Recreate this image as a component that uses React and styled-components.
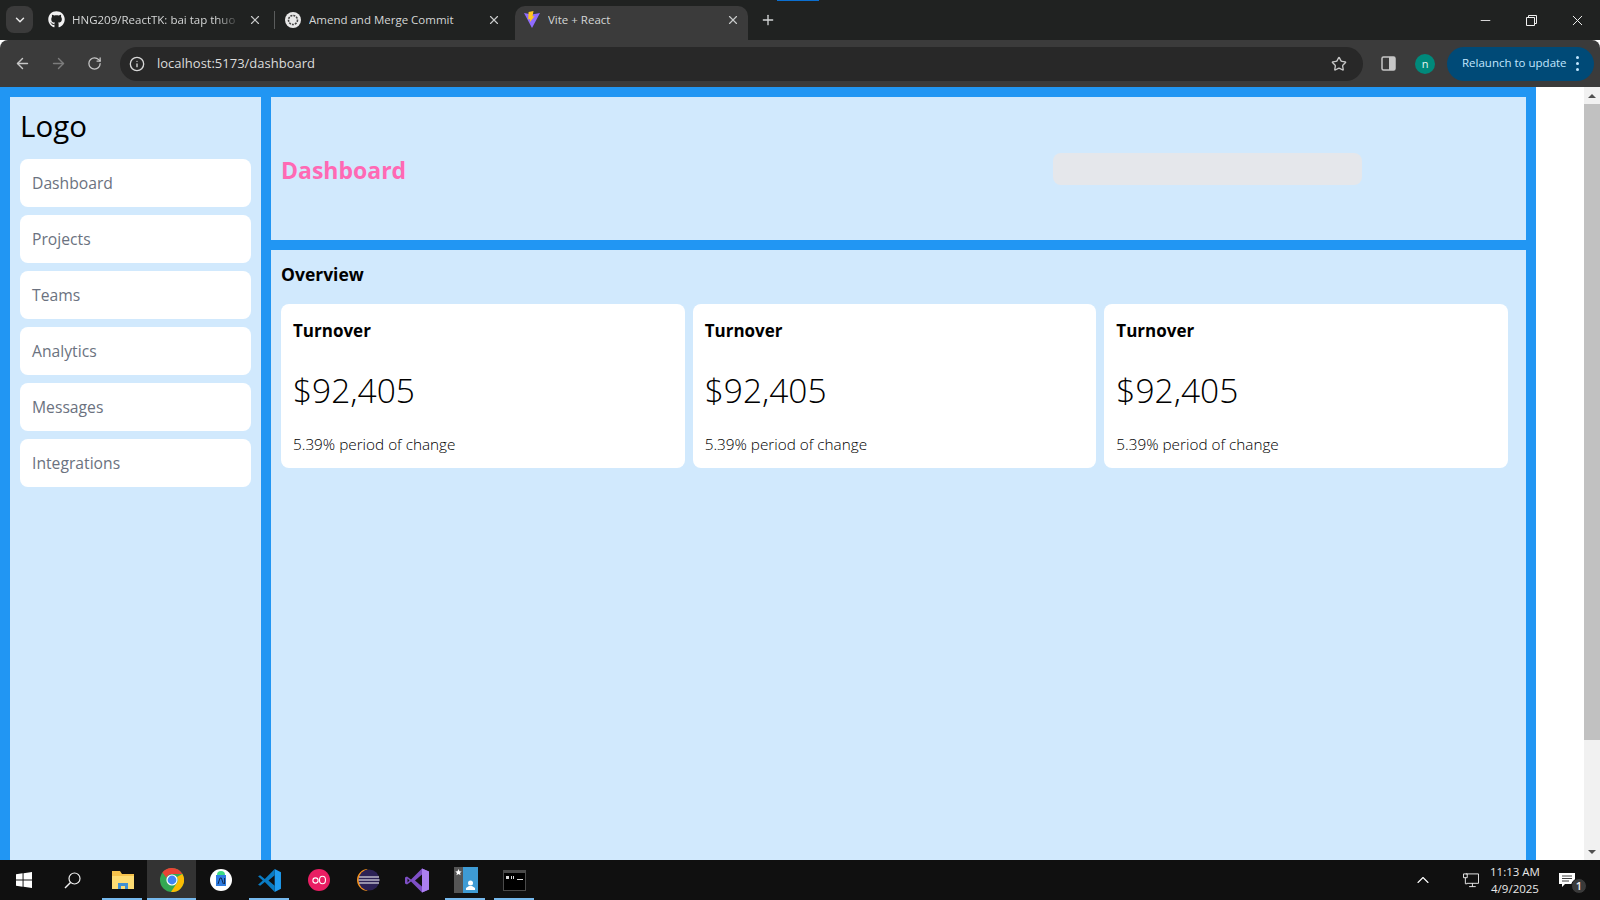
import React from "react";
import styled, { createGlobalStyle } from "styled-components";
import { ArrowLeft, ArrowRight, RotateCw, Info, Star, Plus, X, ChevronDown, ChevronUp, Minus } from "lucide-react";
import { FaGithub } from "react-icons/fa";

const Global = createGlobalStyle`
  html, body { margin: 0; padding: 0; height: 100%; overflow: hidden; }
  body { font-family: "Open Sans", "Liberation Sans", sans-serif; }
  * { box-sizing: border-box; }
`;

const Screen = styled.div`
  width: 1600px;
  height: 900px;
  display: flex;
  flex-direction: column;
  overflow: hidden;
`;

const TabStrip = styled.div`
  height: 40px;
  background: #202221;
  display: flex;
  align-items: flex-end;
  position: relative;
  flex: none;
`;

const TabMenu = styled.div`
  width: 27px;
  height: 27px;
  margin: 0 0 7px 6px;
  border-radius: 8px;
  background: #3b3b3b;
  color: #e8e8e8;
  display: flex;
  align-items: center;
  justify-content: center;
`;

const Tab = styled.div`
  width: ${(p) => p.$width}px;
  height: 34px;
  margin-left: ${(p) => p.$left}px;
  padding: 0 8px 7px 9px;
  display: flex;
  align-items: center;
  gap: ${(p) => p.$gap || 8}px;
  border-radius: 10px 10px 0 0;
  background: ${(p) => (p.$active ? "#3b3b3b" : "transparent")};
  color: #d4d6d6;
  font-size: 11.5px;
`;

const TabTitle = styled.span`
  flex: 1;
  white-space: nowrap;
  overflow: hidden;
  mask-image: ${(p) => (p.$fade ? "linear-gradient(to right, #000 85%, transparent)" : "none")};
`;

const TabDivider = styled.div`
  width: 1px;
  height: 18px;
  margin: 0 0 11px 4px;
  background: #5a5c5c;
`;

const TabClose = styled(X)`
  flex: none;
  color: #c8caca;
`;

const NewTab = styled(Plus)`
  margin: 0 0 12px 12px;
  color: #d4d6d6;
`;

const LoadingMark = styled.div`
  position: absolute;
  top: 0;
  left: 777px;
  width: 42px;
  height: 1px;
  background: #0b6fd0;
`;

const WindowButtons = styled.div`
  margin-left: auto;
  height: 40px;
  display: flex;
  align-items: center;
  color: #f0f0f0;
`;

const WindowButton = styled.div`
  width: 46px;
  display: flex;
  justify-content: center;
`;

const Toolbar = styled.div`
  height: 47px;
  flex: none;
  background: #3b3b3b;
  border-radius: 8px 8px 0 0;
  padding-left: 4px;
  display: flex;
  align-items: center;
  color: #c7c7c7;
`;

const NavButton = styled.div`
  width: 36px;
  display: flex;
  justify-content: center;
  color: ${(p) => (p.$dim ? "#7c7c7c" : "#c7c7c7")};
`;

const Omnibox = styled.div`
  width: 1243px;
  height: 34px;
  margin-left: 8px;
  border-radius: 17px;
  background: #282828;
  display: flex;
  align-items: center;
  padding: 0 16px 0 7px;
`;

const UrlInfo = styled.div`
  width: 20px;
  display: flex;
  justify-content: center;
  color: #d8d8d8;
`;

const Url = styled.span`
  margin: 0 0 2px 10px;
  flex: 1;
  font-size: 13px;
  color: #dcdcdc;
`;

const PanelIcon = styled.svg`
  margin-left: 18px;
  flex: none;
`;

const Avatar = styled.div`
  width: 20px;
  height: 20px;
  margin-left: 19px;
  border-radius: 50%;
  background: #00897b;
  color: #e6f5f3;
  font-size: 11px;
  display: flex;
  align-items: center;
  justify-content: center;
`;

const Relaunch = styled.div`
  width: 147px;
  height: 34px;
  margin-left: 12px;
  border-radius: 17px;
  background: #004a77;
  color: #c2e7ff;
  font-size: 11.5px;
  display: flex;
  align-items: center;
  padding: 0 0 2px 15px;
  gap: 9px;
  white-space: nowrap;
`;

const Dots = styled.div`
  display: flex;
  flex-direction: column;
  gap: 3px;
  margin-top: 2px;
  i {
    width: 3px;
    height: 3px;
    border-radius: 50%;
    background: #c2e7ff;
  }
`;

const Viewport = styled.div`
  flex: 1;
  min-height: 0;
  display: flex;
  background: #fff;
`;

const Page = styled.div`
  width: 1536px;
  height: 100%;
  padding: 10px 10px 0;
  background: #2196f3;
  display: grid;
  grid-template-columns: 251px 1fr;
  gap: 10px;
`;

const Sidebar = styled.aside`
  background: #d1e9fd;
  padding: 8px 10px 10px;
  display: flex;
  flex-direction: column;
  gap: 8px;
`;

const Logo = styled.h1`
  margin: 0 0 4px;
  height: 42px;
  font-size: 29.5px;
  line-height: 42px;
  font-weight: 400;
  color: #000;
`;

const NavItem = styled.div`
  height: 48px;
  padding: 0 12px;
  display: flex;
  align-items: center;
  border-radius: 8px;
  background: #fff;
  color: #6b7280;
  font-size: 15.7px;
  font-weight: 500;
`;

const Main = styled.main`
  display: flex;
  flex-direction: column;
  gap: 10px;
  min-height: 0;
`;

const Header = styled.header`
  height: 143px;
  flex: none;
  background: #d1e9fd;
  padding: 0 164px 0 10px;
  display: flex;
  align-items: center;
  justify-content: space-between;
`;

const PageTitle = styled.h2`
  margin: 2px 0 0;
  font-size: 23px;
  font-weight: 700;
  color: #ff69b4;
`;

const SearchBox = styled.div`
  width: 309px;
  height: 32px;
  border-radius: 8px;
  background: #e5e7eb;
`;

const Overview = styled.section`
  flex: 1;
  background: #d1e9fd;
  padding: 11px 18px 0 10px;
`;

const SectionTitle = styled.h3`
  margin: 0 0 17px;
  height: 26px;
  font-size: 17.5px;
  line-height: 26px;
  font-weight: 700;
  color: #000;
`;

const Cards = styled.div`
  display: grid;
  grid-template-columns: repeat(3, 1fr);
  gap: 8px;
`;

const Card = styled.div`
  height: 164px;
  padding: 13px 12px 12px;
  border-radius: 8px;
  background: #fff;
  display: flex;
  flex-direction: column;
  justify-content: space-between;
  color: #000;
`;

const CardTitle = styled.div`
  font-size: 17px;
  line-height: 28px;
  font-weight: 700;
`;

const CardValue = styled.div`
  margin-top: 3px;
  font-size: 33.5px;
  line-height: 40px;
  font-weight: 300;
`;

const CardNote = styled.div`
  font-size: 15.3px;
  line-height: 24px;
  font-weight: 300;
`;

const Scrollbar = styled.div`
  width: 16px;
  margin-left: auto;
  background: #f1f1f1;
  display: flex;
  flex-direction: column;
  align-items: center;
`;

const ScrollArrow = styled.div`
  height: 17px;
  flex: none;
  display: flex;
  align-items: center;
  justify-content: center;
`;

const ScrollTriangle = styled.div`
  width: 0;
  height: 0;
  border-left: 4px solid transparent;
  border-right: 4px solid transparent;
  border-bottom: ${(p) => (p.$down ? "0" : "4px solid #505050")};
  border-top: ${(p) => (p.$down ? "4px solid #505050" : "0")};
`;

const ScrollThumb = styled.div`
  width: 16px;
  height: 636px;
  background: #c1c1c1;
`;

const ScrollSpace = styled.div`
  flex: 1;
`;

const Taskbar = styled.footer`
  height: 40px;
  flex: none;
  background: #101010;
  display: flex;
  color: #fff;
`;

const Slot = styled.div`
  width: ${(p) => p.$width || 49}px;
  height: 40px;
  position: relative;
  display: flex;
  align-items: center;
  justify-content: center;
  background: ${(p) => (p.$active ? "#333" : "transparent")};
  &::after {
    content: "";
    display: ${(p) => (p.$open || p.$active ? "block" : "none")};
    position: absolute;
    bottom: 0;
    left: ${(p) => (p.$active ? 0 : 4)}px;
    right: ${(p) => (p.$active ? 0 : 5)}px;
    height: 2px;
    background: #76b9ed;
  }
`;

const Tray = styled.div`
  margin-left: auto;
  display: flex;
  align-items: center;
`;

const TrayIcon = styled.div`
  width: ${(p) => p.$width}px;
  display: flex;
  justify-content: center;
  position: relative;
`;

const Clock = styled.div`
  width: 72px;
  text-align: center;
  font-size: 11.5px;
  line-height: 17px;
  color: #e8e8e8;
`;

const Badge = styled.div`
  position: absolute;
  left: 20px;
  top: 5px;
  width: 16px;
  height: 16px;
  border-radius: 50%;
  background: #3a3a3a;
  border: 1px solid #101010;
  color: #eee;
  font-size: 11px;
  font-weight: 600;
  display: flex;
  align-items: center;
  justify-content: center;
`;

const ChromeLogo = ({ size = 24 }) => (
  <svg width={size} height={size} viewBox="0 0 24 24">
    <circle cx="12" cy="12" r="12" fill="#34a853" />
    <path d="M12 0a12 12 0 0 1 10.4 6H12a6 6 0 0 0-5.6 3.8L2.4 4.5A12 12 0 0 1 12 0z" fill="#ea4335" />
    <path d="M22.4 6A12 12 0 0 1 11 24l5.2-8A6 6 0 0 0 16.9 9z" fill="#fbbc04" />
    <circle cx="12" cy="12" r="5.6" fill="#fff" />
    <circle cx="12" cy="12" r="4.4" fill="#4285f4" />
  </svg>
);

const ViteLogo = () => (
  <svg width="16" height="17" viewBox="0 0 16 17">
    <path d="M0 2l8 1.4L16 2 8 17z" fill="#8f6bff" />
    <path d="M9.5 0L4.6 1l-.4 7.5 2-.4-.4 3.2L10.7 5l-2.2.4z" fill="#ffc61f" />
  </svg>
);

const OpenAiMark = () => (
  <svg width="16" height="16" viewBox="0 0 16 16">
    <circle cx="8" cy="8" r="8" fill="#e8e8e8" />
    <circle cx="8" cy="8" r="4.5" fill="none" stroke="#444" strokeWidth="1.6" strokeDasharray="2 1" />
  </svg>
);

const WindowsLogo = () => (
  <svg width="16" height="16" viewBox="0 0 17 17">
    <path d="M0 2.4l7-1v6.7H0zM8 1.200L17 0v8.100H8zM0 9h7v6.700l-7-1zM8 9h9v8l-9-1.200z" fill="#fff" />
  </svg>
);

const SearchIcon = () => (
  <svg width="17" height="17" viewBox="0 0 17 17" fill="none" stroke="#f2f2f2" strokeWidth="1.200">
    <circle cx="10.500" cy="6.500" r="5.500" />
    <path d="M6.500 10.500L1 16" strokeWidth="1.500" />
  </svg>
);

const FolderIcon = () => (
  <svg width="22" height="20" viewBox="0 0 22 20">
    <path d="M0 1h8l2 3h12v15H0z" fill="#f5c24c" />
    <path d="M0 6h22v13H0z" fill="#fddc73" />
    <path d="M6 19v-6h10v6h-3v-3H9v3z" fill="#3f8fd2" />
  </svg>
);

const StudioIcon = () => (
  <svg width="22" height="22" viewBox="0 0 22 22">
    <circle cx="11" cy="11" r="11" fill="#fff" />
    <path d="M6 6h10v11H6z" fill="#2f7de1" />
    <path d="M7 6a4 4 0 0 1 8 0z" fill="#3ddc84" />
    <path d="M8 15l2-6h1.400l2 6M14.600 9v6" stroke="#10264a" strokeWidth="1" fill="none" />
  </svg>
);

const VsCodeIcon = () => (
  <svg width="25" height="25" viewBox="0 0 24 24">
    <path d="M17 1l6 3v16l-6 3z" fill="#1f9cf0" />
    <path d="M17 1L7.500 10.500 3 7 1 8l4.500 4L1 16l2 1 4.500-3.500L17 23v-6l-6-5 6-5z" fill="#0a7cc4" />
  </svg>
);

const OoIcon = () => (
  <svg width="22" height="22" viewBox="0 0 22 22">
    <circle cx="11" cy="11" r="11" fill="#e91e63" />
    <circle cx="7.500" cy="11.500" r="2.600" fill="none" stroke="#fff" strokeWidth="1.100" />
    <ellipse cx="14.500" cy="11" rx="3" ry="3.800" fill="none" stroke="#fff" strokeWidth="1.100" />
  </svg>
);

const EclipseIcon = () => (
  <svg width="24" height="22" viewBox="0 0 24 22">
    <path d="M12 0a11 11 0 0 0 0 22A12 12 0 0 1 12 0z" fill="#f7941e" />
    <circle cx="13" cy="11" r="10.500" fill="#2c2255" />
    <path d="M3 8h20M2.500 11h21M3 14h20" stroke="#fff" strokeWidth="1.200" />
  </svg>
);

const StudioVsIcon = () => (
  <svg width="24" height="25" viewBox="0 0 24 24">
    <path d="M17 0l7 3v18l-7 3L6 13l-4 3-2-1V9l2-1 4 3z" fill="#7e4fc6" />
    <path d="M17 0l7 3v18l-7 3z" fill="#ac7ff0" />
    <path d="M17 6v12l-7-6z" fill="#101010" />
    <path d="M2.500 10v4l2-2z" fill="#101010" />
  </svg>
);

const ContactsIcon = () => (
  <svg width="24" height="26" viewBox="0 0 24 26">
    <path d="M0 0h9v26H0z" fill="#555" />
    <path d="M9 0h15v26H9z" fill="#3e9bd4" />
    <path d="M4.500 2l1 2.200 2.200.2-1.700 1.500.6 2.300-2.100-1.300-2.100 1.300.6-2.300L1.300 4.400l2.200-.2z" fill="#fff" />
    <circle cx="16.500" cy="16" r="2.500" fill="#fff" />
    <path d="M12 23v-2l3-2h3l3 2v2z" fill="#fff" />
  </svg>
);

const ConsoleIcon = () => (
  <svg width="23" height="21" viewBox="0 0 23 21">
    <path d="M0 0h23v21H0z" fill="#4a4a4a" />
    <path d="M1 3h21v17H1z" fill="#000" />
    <path d="M3 6h3v3H3zM8 6h1v3H8zM10 6h1v3h-1zM14 9h6v1h-6z" fill="#ddd" />
  </svg>
);

const MonitorIcon = () => (
  <svg width="17" height="15" viewBox="0 0 17 15" fill="none" stroke="#eee" strokeWidth="1">
    <path d="M3 .5h13.500v10H4M10 10.500V14M6.500 14H13.500" />
    <path d="M.5 .5h4v4h-4zM2.500 4.500V11h2" />
  </svg>
);

const NotificationIcon = () => (
  <svg width="16" height="15" viewBox="0 0 16 15">
    <path d="M0 0h16v11H6l-3 3v-3H0z" fill="#fff" />
    <path d="M3 3h10M3 5.500h10M3 8h7" stroke="#101010" strokeWidth=".8" />
  </svg>
);

const navItems = ["Dashboard", "Projects", "Teams", "Analytics", "Messages", "Integrations"];

const apps = [
  { icon: <FolderIcon />, open: true },
  { icon: <ChromeLogo />, active: true },
  { icon: <StudioIcon /> },
  { icon: <VsCodeIcon />, open: true },
  { icon: <OoIcon /> },
  { icon: <EclipseIcon /> },
  { icon: <StudioVsIcon /> },
  { icon: <ContactsIcon />, open: true },
  { icon: <ConsoleIcon />, open: true },
];

const App = () => (
  <Screen>
    <Global />
    <TabStrip>
      <TabMenu><ChevronDown size={14} strokeWidth={2.5} /></TabMenu>
      <Tab $width={231} $left={6} $gap={7}>
        <FaGithub size={17} color="#f2f2f2" />
        <TabTitle $fade>HNG209/ReactTK: bai tap thuo</TabTitle>
        <TabClose size={14} />
      </Tab>
      <TabDivider />
      <Tab $width={233} $left={1}>
        <OpenAiMark />
        <TabTitle>Amend and Merge Commit</TabTitle>
        <TabClose size={14} />
      </Tab>
      <Tab $width={233} $left={6} $active>
        <ViteLogo />
        <TabTitle>Vite + React</TabTitle>
        <TabClose size={14} />
      </Tab>
      <NewTab size={16} />
      <LoadingMark />
      <WindowButtons>
        <WindowButton><Minus size={15} strokeWidth={1.4} /></WindowButton>
        <WindowButton>
          <svg width="11" height="11" viewBox="0 0 11 11" fill="none" stroke="currentColor">
            <path d="M.5 2.500h8v8h-8zM2.500 2.500v-2h8v8h-2" />
          </svg>
        </WindowButton>
        <WindowButton><X size={17} strokeWidth={1.4} /></WindowButton>
      </WindowButtons>
    </TabStrip>
    <Toolbar>
      <NavButton><ArrowLeft size={17} /></NavButton>
      <NavButton $dim><ArrowRight size={17} /></NavButton>
      <NavButton><RotateCw size={15} /></NavButton>
      <Omnibox>
        <UrlInfo><Info size={16} /></UrlInfo>
        <Url>localhost:5173/dashboard</Url>
        <Star size={16} />
      </Omnibox>
      <PanelIcon width="15" height="15" viewBox="0 0 15 15">
        <rect x="1" y="1" width="13" height="13" rx="1.500" fill="#3b3b3b" stroke="#c7c7c7" strokeWidth="1.500" />
        <rect x="8" y="1" width="6" height="13" fill="#c7c7c7" />
      </PanelIcon>
      <Avatar>n</Avatar>
      <Relaunch>
        Relaunch to update
        <Dots><i /><i /><i /></Dots>
      </Relaunch>
    </Toolbar>
    <Viewport>
      <Page>
        <Sidebar>
          <Logo>Logo</Logo>
          {navItems.map((item) => <NavItem key={item}>{item}</NavItem>)}
        </Sidebar>
        <Main>
          <Header>
            <PageTitle>Dashboard</PageTitle>
            <SearchBox />
          </Header>
          <Overview>
            <SectionTitle>Overview</SectionTitle>
            <Cards>
              {[0, 1, 2].map((i) => (
                <Card key={i}>
                  <CardTitle>Turnover</CardTitle>
                  <CardValue>$92,405</CardValue>
                  <CardNote>5.39% period of change</CardNote>
                </Card>
              ))}
            </Cards>
          </Overview>
        </Main>
      </Page>
      <Scrollbar>
        <ScrollArrow><ScrollTriangle /></ScrollArrow>
        <ScrollThumb />
        <ScrollSpace />
        <ScrollArrow><ScrollTriangle $down /></ScrollArrow>
      </Scrollbar>
    </Viewport>
    <Taskbar>
      <Slot $width={47}><WindowsLogo /></Slot>
      <Slot $width={51}><SearchIcon /></Slot>
      {apps.map((app, i) => (
        <Slot key={i} $open={app.open} $active={app.active}>{app.icon}</Slot>
      ))}
      <Tray>
        <TrayIcon $width={80}><ChevronUp size={20} strokeWidth={1.3} /></TrayIcon>
        <TrayIcon $width={16}><MonitorIcon /></TrayIcon>
        <Clock>11:13 AM<br />4/9/2025</Clock>
        <TrayIcon $width={32}>
          <NotificationIcon />
          <Badge>1</Badge>
        </TrayIcon>
        <TrayIcon $width={17} />
      </Tray>
    </Taskbar>
  </Screen>
);

export default App;
